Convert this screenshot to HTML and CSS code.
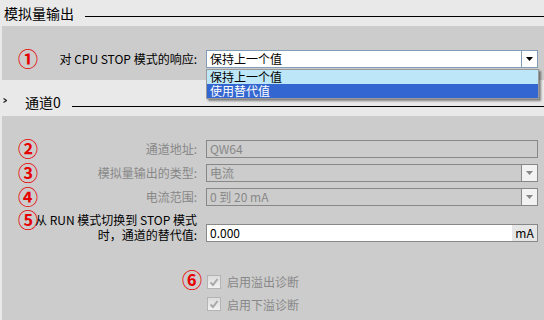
FILE: index.html
```html
<!DOCTYPE html>
<html lang="zh-CN">
<head>
    <meta charset="UTF-8">
    <title>模拟量输出</title>
    <link rel="stylesheet" href="styles.css">
</head>
<body>
    <div class="section-head">
        <span class="head-title">模拟量输出</span>
        <span class="head-line"></span>
    </div>
    <div class="panel panel-top">
        <div class="row">
            <span class="num">①</span>
            <span class="lbl">对 CPU STOP 模式的响应:</span>
            <div class="field select active">
                <span class="val">保持上一个值</span>
                <span class="btn"><svg width="7" height="4" viewBox="0 0 7 4"><path d="M0 0h7L3.5 4z" fill="#000"/></svg></span>
                <ul class="menu">
                    <li class="hover">保持上一个值</li>
                    <li class="picked">使用替代值</li>
                </ul>
            </div>
        </div>
    </div>
    <div class="section-head sub">
        <svg class="chev" width="4" height="5" viewBox="0 0 4 5"><path d="M0.5 0.5l3 2-3 2" fill="none" stroke="#222" stroke-width="1.2"/></svg>
        <span class="head-title">通道0</span>
        <span class="head-line"></span>
    </div>
    <div class="panel panel-ch">
        <div class="row">
            <span class="num">②</span>
            <span class="lbl dim">通道地址:</span>
            <div class="field off"><span class="val">QW64</span></div>
        </div>
        <div class="row">
            <span class="num">③</span>
            <span class="lbl dim">模拟量输出的类型:</span>
            <div class="field off select">
                <span class="val">电流</span>
                <span class="btn"><svg width="7" height="4" viewBox="0 0 7 4"><path d="M0 0h7L3.5 4z" fill="#888"/></svg></span>
            </div>
        </div>
        <div class="row">
            <span class="num">④</span>
            <span class="lbl dim">电流范围:</span>
            <div class="field off select">
                <span class="val">0 到 20 mA</span>
                <span class="btn"><svg width="7" height="4" viewBox="0 0 7 4"><path d="M0 0h7L3.5 4z" fill="#888"/></svg></span>
            </div>
        </div>
        <div class="row row-two">
            <span class="num">⑤</span>
            <span class="lbl two">从 RUN 模式切换到 STOP 模式<br>时，通道的替代值:</span>
            <div class="field">
                <span class="val">0.000</span>
                <span class="unit">mA</span>
            </div>
        </div>
        <div class="row check-row first">
            <span class="num"></span>
            <span class="lbl"><span class="num inline">⑥</span></span>
            <label class="check">
                <span class="box"><svg width="12" height="12" viewBox="0 0 12 12"><path d="M2.5 6.5l2.5 2.5 4.5-6" fill="none" stroke="#a8a8a8" stroke-width="2"/></svg></span>
                启用溢出诊断
            </label>
        </div>
        <div class="row check-row">
            <span class="num"></span>
            <span class="lbl"></span>
            <label class="check">
                <span class="box"><svg width="12" height="12" viewBox="0 0 12 12"><path d="M2.5 6.5l2.5 2.5 4.5-6" fill="none" stroke="#a8a8a8" stroke-width="2"/></svg></span>
                启用下溢诊断
            </label>
        </div>
    </div>
</body>
</html>
```

FILE: styles.css
```css
body {
    margin: 0;
    width: 544px;
    height: 320px;
    overflow: hidden;
    background-color: #e9e9e9;
    font-family: "Noto Sans CJK SC", sans-serif;
    font-size: 12px;
    color: #000;
}
.section-head {
    display: flex;
    align-items: flex-start;
    height: 26px;
    padding-left: 4px;
}
.section-head.sub {
    height: 36px;
    padding-left: 3px;
}
.head-title {
    font-size: 14px;
    line-height: 20px;
    margin-top: 3px;
}
.sub .head-title {
    margin-top: 12px;
}
.head-line {
    flex: 1;
    height: 1px;
    background: #000;
    margin-top: 16px;
    margin-left: 11px;
}
.sub .head-line {
    margin-top: 26px;
}
.chev {
    margin-top: 18px;
    margin-right: 18px;
}
.panel {
    margin-left: 2px;
    background-color: #cccccc;
    padding: 0 6px 0 16px;
}
.panel-top {
    padding-top: 24px;
    padding-bottom: 12px;
}
.panel-ch {
    display: flex;
    flex-direction: column;
    gap: 6px;
    padding-top: 24px;
    padding-bottom: 7px;
}
.row {
    display: grid;
    grid-template-columns: 21px 167px 332px;
    align-items: center;
    height: 18px;
}
.num {
    color: #e60000;
    font-size: 20px;
    line-height: 18px;
    font-weight: bold;
    white-space: nowrap;
}
.lbl {
    text-align: right;
    padding-right: 9px;
    line-height: 18px;
    white-space: nowrap;
}
.lbl.dim {
    color: #888;
}
.row-two {
    height: 30px;
    align-items: end;
}
.row-two .num {
    align-self: start;
    line-height: 16px;
}
.lbl.two {
    line-height: 15px;
    display: flex;
    flex-direction: column;
    align-items: flex-end;
    margin-left: -4px;
}
.field {
    position: relative;
    box-sizing: border-box;
    height: 18px;
    display: flex;
    align-items: stretch;
    background: #fff;
    border: 1px solid #888;
    line-height: 16px;
}
.field .val {
    flex: 1;
    padding-left: 3px;
}
.field.active {
    border-color: #7f9db9;
}
.field.off {
    background: #cccccc;
    color: #888;
}
.btn {
    width: 15px;
    border-left: 1px solid #7f9db9;
    background: #fff;
    display: flex;
    align-items: center;
    justify-content: center;
}
.off .btn {
    border-left-color: #888;
    background: #f2f2f2;
}
.unit {
    width: 25px;
    background: #e6e6e6;
    text-align: center;
}
.menu {
    position: absolute;
    left: -1px;
    top: calc(100% + 2px);
    width: 333px;
    box-sizing: border-box;
    margin: 0;
    padding: 0;
    list-style: none;
    background: #fff;
    border: 1px solid #999;
    box-shadow: 2px 2px 2px rgba(0, 0, 0, 0.45);
}
.menu li {
    height: 14px;
    line-height: 14px;
    padding-left: 3px;
}
.menu .hover {
    background: #bde6f8;
}
.menu .picked {
    background: #3366d0;
    color: #fff;
}
.check-row.first {
    margin-top: 23px;
}
.num.inline {
    margin-right: -5px;
}
.check {
    display: flex;
    align-items: center;
    color: #888;
    padding-left: 1px;
}
.box {
    box-sizing: border-box;
    width: 14px;
    height: 14px;
    margin-right: 6px;
    border: 1px solid #b4b4b4;
    background: linear-gradient(#dcdcdc, #f2f2f2);
    display: flex;
    align-items: center;
    justify-content: center;
}
```
